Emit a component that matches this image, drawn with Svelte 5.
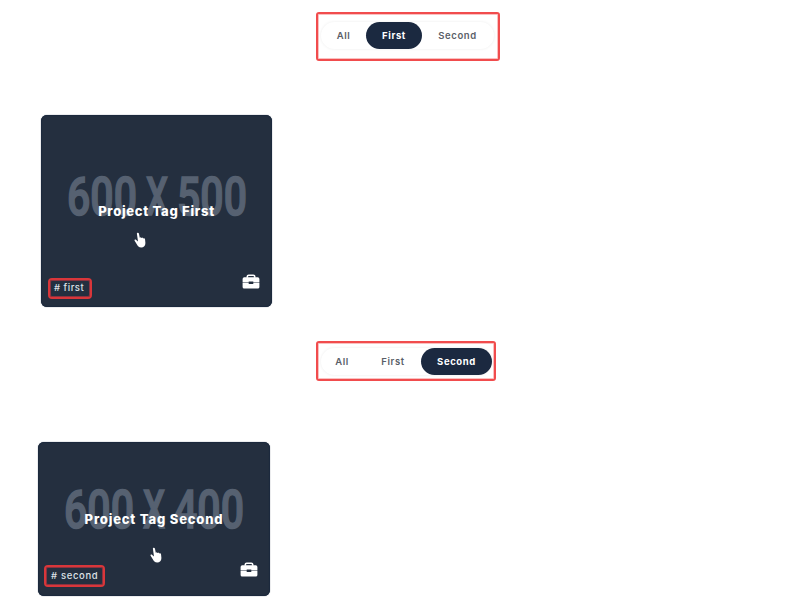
<script>
  const tabs = ['All', 'First', 'Second'];
  const sections = [
    {
      id: 'first', active: 'First', title: 'Project Tag First', tag: 'first', height: 500
    },
    {
      id: 'second', active: 'Second', title: 'Project Tag Second', tag: 'second', height: 400
    }
  ];
</script>

<main>
  {#each sections as s}
    <section class={s.id}>
      <div class="frame">
        <nav>
          {#each tabs as tab}
            <button class={tab.toLowerCase()} class:active={tab === s.active}>{tab}</button>
          {/each}
        </nav>
      </div>
      <article>
        <svg class="size" width="180" height="60" viewBox="0 0 180 60">
          <text x="0" y="49" textLength="70" lengthAdjust="spacingAndGlyphs">600</text>
          <text x="79" y="49" textLength="22" lengthAdjust="spacingAndGlyphs">X</text>
          <text x="110" y="49" textLength="70" lengthAdjust="spacingAndGlyphs">{s.height}</text>
        </svg>
        <h3>{s.title}</h3>
        <svg class="hand" width="12" height="16" viewBox="0 0 12 16">
          <path d="M2.9 1.7C2.7.5 4.6.2 4.9 1.4L5.8 5.8 6.7 5.2 7.6 6.1 8.5 5.6 9.3 6.5C10.4 6 11 6.8 11.1 7.7L11.4 11C11.4 13.8 9.8 15.5 7.3 15.5 4.8 15.5 3.7 14 2.8 12.2L.6 8.7C.2 7.6 1.5 7.2 2.2 8L4 9.4Z" />
        </svg>
        <footer>
          <span class="tag"># {s.tag}</span>
          <svg class="case" width="18" height="15" viewBox="0 0 18 15">
            <path class="grip" d="M5.3 3.7V2.5Q5.3 1.2 6.7 1.2H11.3Q12.7 1.2 12.7 2.5V3.7" />
            <path d="M2.3 3.3H15.7Q17.4 3.3 17.4 5V8.4H11.3V7.4H6.7V8.4H.6V5Q.6 3.3 2.3 3.3ZM.6 9H6.7V10H11.3V9H17.4V13Q17.4 14.6 15.8 14.6H2.2Q.6 14.6.6 13Z" />
          </svg>
        </footer>
      </article>
    </section>
  {/each}
</main>

<style>
  :global(body) { background: #fff; }
  main {
    width: 800px;
    height: 600px;
    overflow: hidden;
    display: flex;
    flex-direction: column;
    gap: 34px;
    font-family: Inter, "Open Sans", sans-serif;
  }
  section { display: flex; flex-direction: column; align-items: flex-start; }
  .first { padding-top: 12px; }
  .frame {
    box-sizing: border-box;
    margin-left: 316px;
    border: 2px solid #f14c4d;
    box-shadow: inset 0 0 0 1px #fac0c0;
    border-radius: 3px;
    width: 184px;
    height: 49px;
    padding: 8px 4px 0 3px;
  }
  .second .frame { width: 180px; height: 40px; padding: 5px 2px 0 3px; }
  nav {
    display: flex;
    height: 27px;
    border-radius: 14px;
    box-shadow: 0 0 3px rgba(0, 0, 0, 0.08);
  }
  button {
    border: 0;
    padding: 0;
    height: 27px;
    border-radius: 14px;
    background: transparent;
    color: #5a5e68;
    font: 600 9.5px/27px Inter, sans-serif;
    letter-spacing: 0.6px;
    white-space: nowrap;
  }
  .all { width: 45px; }
  .first button.first { width: 56px; padding: 0; }
  button.second { width: 71px; }
  .second .all { width: 42px; }
  .second button.first { width: 58px; padding: 0 0 0 2px; }
  button.active { background: #1b2940; color: #fff; font-weight: 700; }
  article {
    position: relative;
    box-sizing: border-box;
    background: #242f3f;
    box-shadow: inset 0 0 1px 1px #1c2a3e, 0 0 1px #344151;
    border-radius: 6px;
    display: flex;
    flex-direction: column;
    justify-content: flex-end;
  }
  .first article { margin: 54px 0 0 41px; width: 231px; height: 192px; }
  .second article { margin: 61px 0 0 38px; width: 232px; height: 154px; }
  .size { position: absolute; left: 25.5px; top: 51px; overflow: visible; }
  .second .size { top: 37px; left: 26px; }
  .size text {
    font: 500 53px Roboto, sans-serif;
    fill: #566171;
    stroke: #566171;
    stroke-width: 1.6px;
  }
  h3 {
    position: absolute;
    top: 87px;
    left: 0;
    width: 100%;
    margin: 0;
    text-align: center;
    color: #fff;
    font-size: 13px;
    line-height: 18px;
    font-weight: 800;
    letter-spacing: 0.72px;
    white-space: nowrap;
  }
  .second h3 { top: 68px; letter-spacing: 0.82px; }
  .hand { position: absolute; left: 93px; top: 117px; fill: #fff; }
  .second .hand { left: 112px; top: 105px; }
  footer { display: flex; justify-content: space-between; align-items: flex-end; padding: 0 12px 8px 7px; }
  .second footer { padding-bottom: 9px; padding-left: 6px; }
  .tag {
    box-sizing: border-box;
    width: 44px;
    height: 21px;
    border: 2px solid #d9363a;
    box-shadow: inset 0 0 0 1px #8a3340;
    border-radius: 4px;
    padding-left: 4px;
    color: #dde1e6;
    font-size: 9.5px;
    line-height: 15px;
    font-weight: 500;
    letter-spacing: 0.5px;
    white-space: nowrap;
  }
  .second .tag { width: 61px; height: 22px; line-height: 17px; padding-left: 5px; letter-spacing: 0.65px; }
  .case { margin-bottom: 10px; fill: #fff; }
  .grip { fill: none; stroke: #fff; stroke-width: 1.6; }
</style>
